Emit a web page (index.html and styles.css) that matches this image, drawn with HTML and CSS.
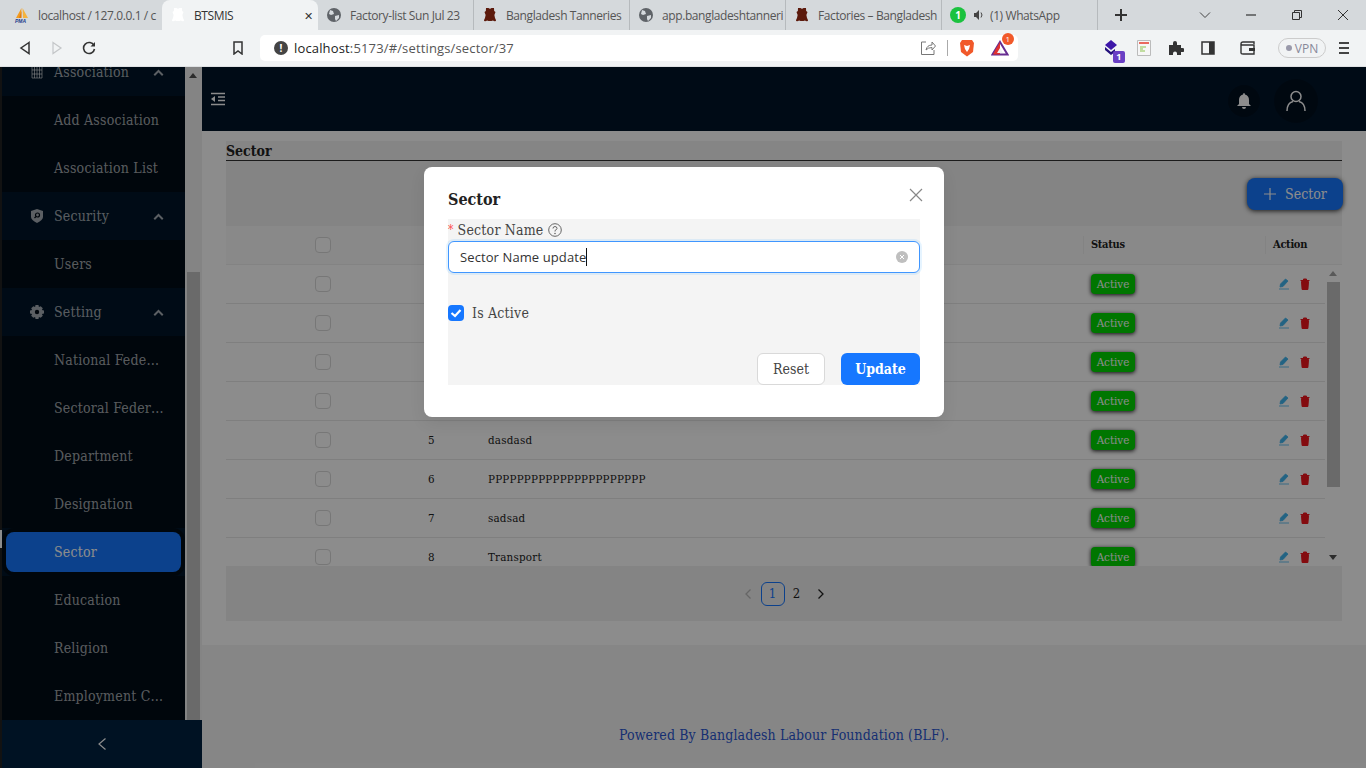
FILE: index.html
```html
<!DOCTYPE html>
<html lang="en">
<head>
    <meta charset="UTF-8">
    <meta name="viewport" content="width=device-width, initial-scale=1.0">
    <title>BTSMIS</title>
    <link rel="stylesheet" href="styles.css">
</head>
<body>

<div class="tabstrip">
    <div class="tab">
        <svg class="fav" viewBox="0 0 16 16"><path d="M7.500 1 2 11h5z" fill="#f39a1e"/><path d="M8.500 1 14 11H9z" fill="#f5b33f"/><path d="M7.500 4v7H5z" fill="#e07a12"/><text x="1" y="15.500" class="pma">PMA</text></svg>
        <span class="tab-title">localhost / 127.0.0.1 / c</span>
    </div>
    <div class="tab tab-active">
        <svg class="fav" viewBox="0 0 16 16"><path d="M4 1h2.500q1.500 1.500 3 0H12q-.5 3 1.500 4-2 3-.5 6 1 1.500 1 3-2 .5-3-.5-3 1-6 0-1 1-3 .5 0-1.500 1-3 1.500-3-.5-6Q4.500 4 4 1z" fill="#fff"/></svg>
        <span class="tab-title">BTSMIS</span>
        <span class="tab-close">✕</span>
    </div>
    <div class="tab">
        <svg class="fav" viewBox="0 0 16 16"><circle cx="8" cy="8" r="7" fill="#5f6368"/><path d="M4 3l3 1 1 3-3 1-2-1zM9 9l4-1 0 3-3 3-1-2z" fill="#d5d9dd"/></svg>
        <span class="tab-title">Factory-list Sun Jul 23</span>
    </div>
    <div class="tab">
        <svg class="fav" viewBox="0 0 16 16"><path d="M4 1h2.500q1.500 1.500 3 0H12q-.5 3 1.500 4-2 3-.5 6 1 1.500 1 3-2 .5-3-.5-3 1-6 0-1 1-3 .5 0-1.500 1-3 1.500-3-.5-6Q4.500 4 4 1z" fill="#5c1a0c"/></svg>
        <span class="tab-title">Bangladesh Tanneries</span>
    </div>
    <div class="tab">
        <svg class="fav" viewBox="0 0 16 16"><circle cx="8" cy="8" r="7" fill="#5f6368"/><path d="M4 3l3 1 1 3-3 1-2-1zM9 9l4-1 0 3-3 3-1-2z" fill="#d5d9dd"/></svg>
        <span class="tab-title">app.bangladeshtanneri</span>
    </div>
    <div class="tab">
        <svg class="fav" viewBox="0 0 16 16"><path d="M4 1h2.500q1.500 1.500 3 0H12q-.5 3 1.500 4-2 3-.5 6 1 1.500 1 3-2 .5-3-.5-3 1-6 0-1 1-3 .5 0-1.500 1-3 1.500-3-.5-6Q4.500 4 4 1z" fill="#5c1a0c"/></svg>
        <span class="tab-title">Factories – Bangladesh</span>
    </div>
    <div class="tab">
        <span class="wa-icon">1</span>
        <svg class="speaker" viewBox="0 0 12 12"><path d="M1 4h2l3-3v10L3 8H1z" fill="#444"/><path d="M8 3.500q2 2.500 0 5" stroke="#444" fill="none"/></svg>
        <span class="tab-title">(1) WhatsApp</span>
    </div>
    <div class="new-tab">
        <svg viewBox="0 0 14 14" width="14" height="14"><path d="M7 1v12M1 7h12" stroke="#333" stroke-width="2"/></svg>
    </div>
    <div class="window-btns">
        <svg viewBox="0 0 12 12" width="12" height="12"><path d="M1 3.500 6 8.500l5-5" stroke="#444" fill="none"/></svg>
        <svg viewBox="0 0 12 12" width="12" height="12"><path d="M1 6h10" stroke="#333" stroke-width="1.200"/></svg>
        <svg viewBox="0 0 12 12" width="12" height="12"><path d="M1.500 3.500h7v7h-7zM3.500 3.500v-2h7v7h-2" stroke="#333" fill="none"/></svg>
        <svg viewBox="0 0 12 12" width="12" height="12"><path d="M1 1l10 10M11 1 1 11" stroke="#333"/></svg>
    </div>
</div>

<div class="toolbar">
    <div class="nav-btns">
        <svg viewBox="0 0 14 14" width="14" height="14"><path d="M11 1.500 3 7l8 5.500z" stroke="#333" stroke-width="1.500" fill="none"/></svg>
        <svg viewBox="0 0 14 14" width="14" height="14"><path d="M3 1.500 11 7l-8 5.500z" stroke="#c4c6c8" stroke-width="1.200" fill="none"/></svg>
        <svg viewBox="0 0 14 14" width="14" height="14"><path d="M12 4.500A5.500 5.500 0 1 0 12.500 8" stroke="#333" stroke-width="1.600" fill="none"/><path d="M13 1v4.500H8.500z" fill="#333"/></svg>
    </div>
    <svg class="bookmark" viewBox="0 0 12 14" width="12" height="14"><path d="M2 1h8v12L6 10l-4 3z" stroke="#333" stroke-width="1.500" fill="none"/></svg>
    <div class="urlbar">
        <span class="info-dot">!</span>
        <span class="url">localhost<span class="url-rest">:5173/#/settings/sector/37</span></span>
        <svg class="share" viewBox="0 0 16 16" width="16" height="16"><path d="M6 2H1.500v12.500H14V10M6 10q1-5 6-5V2l3.500 4-3.500 4V7.500q-4 0-6 2.500z" stroke="#777" fill="none"/></svg>
        <span class="url-sep"></span>
        <svg class="brave" viewBox="0 0 16 18" width="16" height="18"><path d="M3 1h10l2 3-1 9-6 4.500L2 13 1 4z" fill="#f1592a"/><path d="M5 6l3 1 3-1-1 4-2 3-2-3z" fill="#fff"/></svg>
        <span class="bat">
            <svg viewBox="0 0 18 16" width="18" height="16"><path d="M9 2 16.500 14.500h-15z" fill="none" stroke="#662d91" stroke-width="2"/><path d="M9 2 5 8.500l-3 6h7z" fill="#e0322f"/><path d="M9 8l3 5H6z" fill="#f1f3f4"/></svg>
            <span class="bat-badge">1</span>
        </span>
    </div>
    <div class="ext-btns">
        <span class="ext-stack">
            <svg viewBox="0 0 16 16" width="16" height="16"><path d="M7 0l6 5-6 5-6-5z" fill="#3d16a8"/><path d="M1 7l6 5 4-3v3l-4 3-6-5z" fill="#23107c"/></svg>
            <span class="ext-badge">1</span>
        </span>
        <svg viewBox="0 0 14 16" width="14" height="16"><path d="M.5.500h13v15H.5z" fill="#f6f6f6" stroke="#bbb"/><path d="M2 2h10v2H2z" fill="#ea6a5e"/><path d="M3 7h6M3 9h3M3 11h5" stroke="#8bc34a"/></svg>
        <svg viewBox="0 0 16 16" width="16" height="16"><path d="M1 5h4V3a2 2 0 0 1 4 0v2h4v3h1.500a2 2 0 0 1 0 4H13v3H9v-1.500a2 2 0 0 0-4 0V15H1z" fill="#333"/></svg>
        <svg viewBox="0 0 14 14" width="14" height="14"><path d="M1 1h12v12H1z" fill="none" stroke="#333" stroke-width="1.500"/><path d="M8 1h5v12H8z" fill="#333"/></svg>
        <svg class="wallet" viewBox="0 0 16 16" width="16" height="16"><path d="M14 4V2H3Q1 2 1 4v9q0 1 2 1h11v-3M1 4q0 1 2 1h11v3" fill="none" stroke="#333" stroke-width="1.400"/><path d="M9 8h6v3H9z" fill="#333"/></svg>
        <span class="vpn"><i></i>VPN</span>
        <svg class="menu-icon" viewBox="0 0 12 14" width="12" height="14"><path d="M1 2h10M1 7h10M1 12h10" stroke="#444" stroke-width="2"/></svg>
    </div>
</div>

<div class="app">
    <div class="window-edge"></div>

    <aside class="sider">
        <div class="sider-scroll">
            <nav class="menu">
                <div class="menu-title">
                    <svg class="menu-ico" viewBox="0 0 14 14"><path d="M2 1h10v12H2zM7 1v12M2 5h10M2 9h10M4.500 1v12M9.500 1v12" stroke="currentColor" fill="none" stroke-width=".9"/></svg>
                    <span>Association</span><i class="caret"></i>
                </div>
                <div class="menu-item">Add Association</div>
                <div class="menu-item">Association List</div>
                <div class="menu-title">
                    <svg class="menu-ico" viewBox="0 0 14 14"><path d="M7 0l6 2v6q0 3-6 6-6-3-6-6V2z" fill="currentColor"/><circle cx="7.500" cy="6" r="2" fill="none" stroke="#000b16" stroke-width="1.200"/><path d="M6 7.500 4.500 9" stroke="#000b16" stroke-width="1.200"/></svg>
                    <span>Security</span><i class="caret"></i>
                </div>
                <div class="menu-item">Users</div>
                <div class="menu-title">
                    <svg class="menu-ico" viewBox="0 0 14 14"><path d="M5.500 0h3l.4 2 1.800-.8 2.100 2.100-.9 1.800 2.100.4v3l-2.100.4.9 1.800-2.100 2.100-1.800-.8-.4 2h-3l-.4-2-1.800.8-2.100-2.100.9-1.800L0 8.500v-3l2.100-.4-.9-1.800 2.100-2.100 1.800.8z" fill="currentColor"/><circle cx="7" cy="7" r="2.200" fill="#000b16"/></svg>
                    <span>Setting</span><i class="caret"></i>
                </div>
                <div class="menu-item">National Federation</div>
                <div class="menu-item">Sectoral Federation</div>
                <div class="menu-item">Department</div>
                <div class="menu-item">Designation</div>
                <div class="menu-item selected">Sector</div>
                <div class="menu-item">Education</div>
                <div class="menu-item">Religion</div>
                <div class="menu-item">Employment Category</div>
            </nav>
            <div class="sider-bar">
                <i class="sider-up"></i>
                <div class="sider-thumb"></div>
            </div>
        </div>
        <div class="sider-trigger">
            <svg viewBox="0 0 10 14" width="10" height="14"><path d="M8.500 1.500 2 7l6.500 5.500" stroke="#fff" fill="none" stroke-width="1.200"/></svg>
        </div>
    </aside>

    <main class="main">
        <header class="topbar">
            <svg class="fold" viewBox="0 0 16 14" width="16" height="14"><path d="M1 1.500h14M8 5h7M8 8.500h7M1 12.500h14" stroke="#fff" stroke-width="1.300"/><path d="M5 4v6L1 7z" fill="#fff"/></svg>
            <div class="topbar-right">
                <span class="round bell">
                    <svg viewBox="0 0 14 16" width="14" height="16"><path d="M7 0q1 0 1 1.500Q12 2.500 12 7v4l2 2H0l2-2V7q0-4.500 4-5.500Q6 0 7 0zM5 14h4q0 2-2 2t-2-2z" fill="#fff"/></svg>
                </span>
                <span class="round user">
                    <svg viewBox="0 0 20 22" width="20" height="22"><circle cx="10" cy="6.500" r="5" fill="none" stroke="#fff" stroke-width="1.500"/><path d="M1 21q0-8 6-9.500M19 21q0-8-6-9.500" fill="none" stroke="#fff" stroke-width="1.500"/></svg>
                </span>
            </div>
        </header>

        <section class="content">
            <h4 class="page-title">Sector</h4>
            <div class="card-tools">
                <button class="add-btn">
                    <svg viewBox="0 0 14 14" width="14" height="14"><path d="M7 1v12M1 7h12" stroke="#fff" stroke-width="1.200"/></svg>
                    Sector
                </button>
            </div>
            <div class="table-head">
                <div class="cell cell-check"><span class="check"></span></div>
                <div class="cell"></div>
                <div class="cell"></div>
                <div class="cell cell-sep">Status</div>
                <div class="cell cell-sep">Action</div>
            </div>
            <div class="table-wrap">
                <div class="table-body">
                    <div class="row">
                        <div class="cell cell-check"><span class="check"></span></div>
                        <div class="cell"></div><div class="cell"></div>
                        <div class="cell"><span class="status">Active</span></div>
                        <div class="cell cell-act"><svg class="ico-edit" viewBox="0 0 12 12"><path d="M7.500 1l2.500 2-5 5.500-3 .5.500-3zM1 11h10" fill="#3fb4ee" stroke="#3fb4ee" stroke-width=".8"/></svg><svg class="ico-del" viewBox="0 0 12 12"><path d="M2.500 3.500h7l-.6 8H3.100zM1.500 2.500h9M4.500 2.500V1h3v1.500" fill="#f0151c" stroke="#f0151c"/></svg></div>
                    </div>
                    <div class="row">
                        <div class="cell cell-check"><span class="check"></span></div>
                        <div class="cell"></div><div class="cell"></div>
                        <div class="cell"><span class="status">Active</span></div>
                        <div class="cell cell-act"><svg class="ico-edit" viewBox="0 0 12 12"><path d="M7.500 1l2.500 2-5 5.500-3 .5.500-3zM1 11h10" fill="#3fb4ee" stroke="#3fb4ee" stroke-width=".8"/></svg><svg class="ico-del" viewBox="0 0 12 12"><path d="M2.500 3.500h7l-.6 8H3.100zM1.500 2.500h9M4.500 2.500V1h3v1.500" fill="#f0151c" stroke="#f0151c"/></svg></div>
                    </div>
                    <div class="row">
                        <div class="cell cell-check"><span class="check"></span></div>
                        <div class="cell"></div><div class="cell"></div>
                        <div class="cell"><span class="status">Active</span></div>
                        <div class="cell cell-act"><svg class="ico-edit" viewBox="0 0 12 12"><path d="M7.500 1l2.500 2-5 5.500-3 .5.500-3zM1 11h10" fill="#3fb4ee" stroke="#3fb4ee" stroke-width=".8"/></svg><svg class="ico-del" viewBox="0 0 12 12"><path d="M2.500 3.500h7l-.6 8H3.100zM1.500 2.500h9M4.500 2.500V1h3v1.500" fill="#f0151c" stroke="#f0151c"/></svg></div>
                    </div>
                    <div class="row">
                        <div class="cell cell-check"><span class="check"></span></div>
                        <div class="cell"></div><div class="cell"></div>
                        <div class="cell"><span class="status">Active</span></div>
                        <div class="cell cell-act"><svg class="ico-edit" viewBox="0 0 12 12"><path d="M7.500 1l2.500 2-5 5.500-3 .5.500-3zM1 11h10" fill="#3fb4ee" stroke="#3fb4ee" stroke-width=".8"/></svg><svg class="ico-del" viewBox="0 0 12 12"><path d="M2.500 3.500h7l-.6 8H3.100zM1.500 2.500h9M4.500 2.500V1h3v1.500" fill="#f0151c" stroke="#f0151c"/></svg></div>
                    </div>
                    <div class="row">
                        <div class="cell cell-check"><span class="check"></span></div>
                        <div class="cell">5</div><div class="cell">dasdasd</div>
                        <div class="cell"><span class="status">Active</span></div>
                        <div class="cell cell-act"><svg class="ico-edit" viewBox="0 0 12 12"><path d="M7.500 1l2.500 2-5 5.500-3 .5.500-3zM1 11h10" fill="#3fb4ee" stroke="#3fb4ee" stroke-width=".8"/></svg><svg class="ico-del" viewBox="0 0 12 12"><path d="M2.500 3.500h7l-.6 8H3.100zM1.500 2.500h9M4.500 2.500V1h3v1.500" fill="#f0151c" stroke="#f0151c"/></svg></div>
                    </div>
                    <div class="row">
                        <div class="cell cell-check"><span class="check"></span></div>
                        <div class="cell">6</div><div class="cell">PPPPPPPPPPPPPPPPPPPPPP</div>
                        <div class="cell"><span class="status">Active</span></div>
                        <div class="cell cell-act"><svg class="ico-edit" viewBox="0 0 12 12"><path d="M7.500 1l2.500 2-5 5.500-3 .5.500-3zM1 11h10" fill="#3fb4ee" stroke="#3fb4ee" stroke-width=".8"/></svg><svg class="ico-del" viewBox="0 0 12 12"><path d="M2.500 3.500h7l-.6 8H3.100zM1.500 2.500h9M4.500 2.500V1h3v1.500" fill="#f0151c" stroke="#f0151c"/></svg></div>
                    </div>
                    <div class="row">
                        <div class="cell cell-check"><span class="check"></span></div>
                        <div class="cell">7</div><div class="cell">sadsad</div>
                        <div class="cell"><span class="status">Active</span></div>
                        <div class="cell cell-act"><svg class="ico-edit" viewBox="0 0 12 12"><path d="M7.500 1l2.500 2-5 5.500-3 .5.500-3zM1 11h10" fill="#3fb4ee" stroke="#3fb4ee" stroke-width=".8"/></svg><svg class="ico-del" viewBox="0 0 12 12"><path d="M2.500 3.500h7l-.6 8H3.100zM1.500 2.500h9M4.500 2.500V1h3v1.500" fill="#f0151c" stroke="#f0151c"/></svg></div>
                    </div>
                    <div class="row">
                        <div class="cell cell-check"><span class="check"></span></div>
                        <div class="cell">8</div><div class="cell">Transport</div>
                        <div class="cell"><span class="status">Active</span></div>
                        <div class="cell cell-act"><svg class="ico-edit" viewBox="0 0 12 12"><path d="M7.500 1l2.500 2-5 5.500-3 .5.500-3zM1 11h10" fill="#3fb4ee" stroke="#3fb4ee" stroke-width=".8"/></svg><svg class="ico-del" viewBox="0 0 12 12"><path d="M2.500 3.500h7l-.6 8H3.100zM1.500 2.500h9M4.500 2.500V1h3v1.500" fill="#f0151c" stroke="#f0151c"/></svg></div>
                    </div>
                </div>
                <div class="table-bar">
                    <i class="bar-up"></i>
                    <div class="bar-thumb"></div>
                    <i class="bar-down"></i>
                </div>
            </div>
            <div class="pager">
                <svg class="pager-prev" viewBox="0 0 8 12" width="8" height="12"><path d="M6.500 1.500 2 6l4.500 4.500" stroke="#bbb" fill="none" stroke-width="1.300"/></svg>
                <span class="page page-on">1</span>
                <span class="page">2</span>
                <svg class="pager-next" viewBox="0 0 8 12" width="8" height="12"><path d="M1.500 1.500 6 6l-4.500 4.500" stroke="#222" fill="none" stroke-width="1.300"/></svg>
            </div>
        </section>

        <footer class="foot">Powered By Bangladesh Labour Foundation (BLF).</footer>
    </main>

    <div class="overlay">
        <div class="modal">
            <svg class="modal-close" viewBox="0 0 14 14" width="14" height="14"><path d="M1 1l12 12M13 1 1 13" stroke="#888" stroke-width="1.200"/></svg>
            <div class="modal-title">Sector</div>
            <form class="modal-form">
                <label class="field-label"><span class="req">*</span> Sector Name
                    <svg viewBox="0 0 14 14" width="14" height="14"><circle cx="7" cy="7" r="6.300" fill="none" stroke="#666"/><path d="M5 5.500Q5 3.500 7 3.500T9 5.500Q9 6.500 7 7.500V8.500" fill="none" stroke="#666"/><circle cx="7" cy="10.500" r=".8" fill="#666"/></svg>
                </label>
                <div class="input-box">
                    <span class="input-text">Sector Name update</span><i class="input-caret"></i>
                    <svg class="input-clear" viewBox="0 0 12 12" width="12" height="12"><circle cx="6" cy="6" r="6" fill="#bfbfbf"/><path d="M4 4l4 4M8 4 4 8" stroke="#fff"/></svg>
                </div>
                <div class="check-row">
                    <span class="check-on"><svg viewBox="0 0 16 16" width="16" height="16"><path d="M3.500 8 7 11l5.500-6" stroke="#fff" stroke-width="2.200" fill="none"/></svg></span>
                    <span>Is Active</span>
                </div>
                <div class="form-btns">
                    <button type="button" class="btn-reset">Reset</button>
                    <button type="button" class="btn-update">Update</button>
                </div>
            </form>
        </div>
    </div>
</div>

</body>
</html>
```

FILE: styles.css
```css
* {
    box-sizing: border-box;
}

html, body {
    height: 100%;
}

body {
    margin: 0;
    height: 768px;
    overflow: hidden;
    display: flex;
    flex-direction: column;
    font-family: "DejaVu Serif", "Liberation Serif", serif;
    font-stretch: condensed;
    font-size: 14px;
    letter-spacing: .2px;
    background: #333;
}

/* browser chrome */
.tabstrip {
    height: 30px;
    flex: none;
    display: flex;
    align-items: center;
    padding-left: 6px;
    background: #d5d9dc;
    font-family: "Open Sans", "Noto Sans", sans-serif;
    font-stretch: normal;
    font-size: 12px;
    letter-spacing: 0;
    color: #555;
}

.tab {
    width: 156px;
    height: 30px;
    flex: none;
    display: flex;
    align-items: center;
    padding-left: 8px;
    gap: 8px;
    border-right: 1px solid #b6babd;
    overflow: hidden;
}

.tab:first-child {
    border-right: none;
}

.tab-active {
    background: #f1f3f4;
    color: #333;
    border-radius: 8px 8px 0 0;
    border-right: none;
    position: relative;
}

.tab-title {
    white-space: nowrap;
    overflow: hidden;
    flex: 1;
    letter-spacing: -.4px;
}

.tab-close {
    font-size: 11px;
    padding-right: 5px;
    color: #333;
}

.fav {
    width: 16px;
    height: 16px;
    flex: none;
}

.pma {
    font-family: "Liberation Sans", sans-serif;
    font-size: 5px;
    font-weight: 700;
    font-style: italic;
    fill: #223a8c;
}

.wa-icon {
    width: 16px;
    height: 16px;
    flex: none;
    border-radius: 50%;
    background: #1bc23f;
    color: #fff;
    font-size: 10px;
    font-weight: 700;
    line-height: 16px;
    text-align: center;
}

.speaker {
    width: 12px;
    height: 12px;
    flex: none;
    margin-left: -1px;
    margin-right: -3px;
}

.new-tab {
    width: 46px;
    padding-left: 16px;
    display: flex;
}

.window-btns {
    display: flex;
    align-items: center;
    margin-left: auto;
    gap: 34px;
    padding-right: 17px;
}

.toolbar {
    height: 37px;
    flex: none;
    display: flex;
    align-items: center;
    background: #f1f3f4;
    border-bottom: 1px solid #dfe1e3;
}

.nav-btns {
    display: flex;
    gap: 18px;
    padding-left: 18px;
    width: 232px;
}

.bookmark {
    flex: none;
}

.urlbar {
    width: 758px;
    height: 26px;
    margin-left: 16px;
    flex: none;
    display: flex;
    align-items: center;
    background: #fff;
    border-radius: 5px;
    padding-left: 14px;
    font-family: "Open Sans", "Noto Sans", sans-serif;
    font-stretch: normal;
    font-size: 13px;
    color: #222;
}

.info-dot {
    width: 14px;
    height: 14px;
    border-radius: 50%;
    background: #444;
    color: #fff;
    font-size: 10px;
    font-weight: 700;
    line-height: 14px;
    text-align: center;
    flex: none;
}

.url {
    margin-left: 6px;
    flex: 1;
    letter-spacing: .15px;
}

.url-rest {
    color: #555;
}

.url-sep {
    width: 1px;
    height: 16px;
    background: #aaa;
    margin: 0 11px;
}

.bat {
    position: relative;
    margin: 0 9px 0 16px;
    display: flex;
}

.bat-badge {
    position: absolute;
    top: -7px;
    right: -5px;
    width: 12px;
    height: 12px;
    border-radius: 50%;
    background: #f1592a;
    color: #fff;
    font-size: 8px;
    line-height: 12px;
    text-align: center;
}

.ext-btns {
    flex: 1;
    display: flex;
    align-items: center;
    padding-left: 86px;
    gap: 17px;
}

.ext-stack {
    position: relative;
    display: flex;
}

.ext-badge {
    position: absolute;
    right: -5px;
    bottom: -7px;
    width: 12px;
    height: 12px;
    border-radius: 2px;
    background: #6a3fc4;
    color: #fff;
    font-family: "Open Sans", sans-serif;
    font-stretch: normal;
    font-size: 9px;
    font-weight: 700;
    line-height: 12px;
    text-align: center;
}

.wallet {
    margin-left: 8px;
}

.vpn {
    width: 48px;
    height: 20px;
    margin-left: 5px;
    display: flex;
    align-items: center;
    justify-content: center;
    gap: 3px;
    border: 1px solid #ccc;
    border-radius: 10px;
    font-family: "Open Sans", sans-serif;
    font-stretch: normal;
    font-size: 12px;
    letter-spacing: 0;
    color: #889;
}

.vpn i {
    width: 6px;
    height: 6px;
    border-radius: 50%;
    background: #99a;
}

.menu-icon {
    margin-left: -5px;
}

/* app */
.app {
    height: 701px;
    flex: none;
    display: flex;
    position: relative;
    overflow: hidden;
}

.window-edge {
    width: 2px;
    flex: none;
    background: linear-gradient(#222 0 463px, #fff 463px 481px, #222 481px);
}

.sider {
    width: 200px;
    flex: none;
    display: flex;
    flex-direction: column;
    background: #001529;
}

.sider-scroll {
    height: 653px;
    display: flex;
    overflow: hidden;
}

.menu {
    width: 183px;
    flex: none;
    margin-top: -19px;
    color: rgba(255, 255, 255, .65);
}

.menu-title {
    height: 48px;
    display: flex;
    align-items: center;
    padding-left: 28px;
    padding-right: 21px;
    background: #001529;
}

.menu-ico {
    width: 14px;
    height: 14px;
    flex: none;
    margin-right: 10px;
}

.menu-title span {
    flex: 1;
}

.caret {
    width: 7px;
    height: 7px;
    margin-top: 4px;
    margin-right: 2px;
    border-left: 2px solid currentColor;
    border-top: 2px solid currentColor;
    transform: rotate(45deg);
}

.menu-item {
    height: 48px;
    line-height: 48px;
    padding-left: 52px;
    padding-right: 21px;
    background: #000c17;
    white-space: nowrap;
    overflow: hidden;
    text-overflow: ellipsis;
}

.menu-item.selected {
    height: 40px;
    line-height: 40px;
    margin: 4px 4px;
    padding-left: 48px;
    border-radius: 8px;
    background: #1677ff;
    color: #fff;
    box-shadow: 0 0 0 4px #000c17;
}

.sider-bar {
    width: 17px;
    flex: none;
    background: #f1f1f1;
    padding: 0 2px;
    position: relative;
}

.sider-up {
    position: absolute;
    top: 6px;
    left: 4px;
    border: 4px solid transparent;
    border-top: none;
    border-bottom: 5px solid #505050;
}

.sider-thumb {
    margin-top: 205px;
    height: 448px;
    background: #c1c1c1;
}

.sider-trigger {
    height: 48px;
    display: flex;
    align-items: center;
    justify-content: center;
    background: #002140;
}

.main {
    flex: 1;
    display: flex;
    flex-direction: column;
    min-width: 0;
}

.topbar {
    height: 64px;
    flex: none;
    display: flex;
    align-items: center;
    padding-left: 8px;
    background: #001529;
}

.topbar-right {
    margin-left: auto;
    display: flex;
    align-items: center;
    gap: 14px;
    padding-right: 48px;
    padding-top: 4px;
}

.round {
    display: flex;
    align-items: center;
    justify-content: center;
    border-radius: 50%;
    background: rgba(0, 0, 0, .25);
}

.bell {
    width: 32px;
    height: 32px;
}

.user {
    width: 44px;
    height: 44px;
}

.content {
    height: 514px;
    flex: none;
    padding: 10px 24px 24px;
    background: #fff;
}

.page-title {
    height: 20px;
    margin: 0;
    padding-top: 1px;
    background: #f3f3f3;
    border-bottom: 1px solid #333;
    font-size: 14px;
    line-height: 19px;
    font-weight: 700;
    letter-spacing: 0;
    color: #222;
}

.card-tools {
    height: 65px;
    display: flex;
    justify-content: flex-end;
    align-items: center;
    background: #f0f0f0;
    padding-top: 1px;
}

.add-btn {
    width: 96px;
    height: 32px;
    margin-right: -1px;
    display: flex;
    align-items: center;
    justify-content: center;
    gap: 8px;
    border: none;
    border-radius: 8px;
    background: #1677ff;
    color: #fff;
    font: inherit;
    box-shadow: 0 1px 5px rgba(0, 0, 0, .8);
}

.table-head, .row {
    display: grid;
    align-items: center;
    font-size: 11.500px;
    color: #222;
}

.table-head {
    height: 39px;
    grid-template-columns: 194px 60px 603px 182px 1fr;
    background: #fafafa;
    border-bottom: 1px solid #eee;
    font-size: 11px;
    letter-spacing: -.3px;
    font-weight: 700;
}

.row {
    height: 39px;
    grid-template-columns: 194px 60px 603px 182px 1fr;
    background: #fff;
    border-bottom: 1px solid #e8e8e8;
}

.cell {
    padding-left: 8px;
    white-space: nowrap;
}

.cell-check {
    padding-left: 89px;
    display: flex;
}

.cell-sep {
    padding-left: 7px;
    border-left: 1px solid #eee;
    line-height: 18px;
}

.cell-act {
    padding-left: 13px;
    display: flex;
    align-items: center;
    gap: 9px;
}

.ico-edit, .ico-del {
    width: 12px;
    height: 12px;
}

.check {
    width: 16px;
    height: 16px;
    border: 1px solid #d9d9d9;
    border-radius: 4px;
    background: #fff;
}

.table-wrap {
    height: 301px;
    display: flex;
    background: #fff;
}

.table-body {
    flex: 1;
    overflow: hidden;
}

.table-bar {
    width: 17px;
    flex: none;
    padding: 17px 2px;
    position: relative;
    background: #fff;
}

.bar-thumb {
    height: 205px;
    background: #c1c1c1;
}

.bar-up, .bar-down {
    position: absolute;
    left: 4px;
    border: 4px solid transparent;
}

.bar-up {
    top: 6px;
    border-top: none;
    border-bottom: 5px solid #a3a3a3;
}

.bar-down {
    bottom: 6px;
    border-bottom: none;
    border-top: 5px solid #505050;
}

.status {
    display: inline-block;
    width: 44px;
    height: 20px;
    text-align: center;
    line-height: 20px;
    letter-spacing: 0;
    border-radius: 4px;
    background: #00d800;
    color: #fff;
    box-shadow: 0 1px 4px rgba(0, 0, 0, .9);
}

.pager {
    height: 55px;
    display: flex;
    align-items: center;
    justify-content: center;
    background: #f0f0f0;
}

.pager-prev {
    margin-right: 9px;
}

.pager-next {
    margin-left: 8px;
}

.page {
    width: 24px;
    height: 24px;
    line-height: 22px;
    text-align: center;
    border: 1px solid transparent;
    border-radius: 6px;
    font-size: 13px;
    color: #222;
}

.page-on {
    border-color: #1677ff;
    color: #1677ff;
}

.foot {
    flex: 1;
    padding-top: 82px;
    text-align: center;
    background: #f5f5f5;
    color: #2a55d0;
    letter-spacing: .13px;
}

/* modal */
.overlay {
    position: absolute;
    inset: 0;
    display: flex;
    justify-content: center;
    align-items: flex-start;
    padding-top: 100px;
    background: rgba(0, 0, 0, .45);
}

.modal {
    width: 520px;
    height: 250px;
    position: relative;
    margin-left: 2px;
    padding: 20px 24px 32px;
    border-radius: 8px;
    background: #fff;
    box-shadow: 0 6px 16px rgba(0, 0, 0, .08);
}

.modal-close {
    position: absolute;
    top: 21px;
    right: 21px;
}

.modal-title {
    height: 24px;
    margin-bottom: 8px;
    padding-top: 1px;
    font-size: 16px;
    line-height: 24px;
    font-weight: 700;
    letter-spacing: 0;
    color: #222;
}

.modal-form {
    height: 166px;
    background: #f4f4f4;
}

.field-label {
    height: 22px;
    display: flex;
    align-items: center;
    gap: 4px;
    color: #444;
}

.req {
    color: #ff4d4f;
    font-size: 12px;
}

.input-box {
    height: 32px;
    display: flex;
    align-items: center;
    padding: 0 11px;
    background: #fff;
    border: 1px solid #4096ff;
    border-radius: 6px;
    box-shadow: 0 0 0 2px rgba(5, 145, 255, .1);
    font-family: "Open Sans", "Noto Sans", sans-serif;
    font-stretch: normal;
    font-size: 13px;
    letter-spacing: .1px;
    color: #333;
}

.input-caret {
    width: 1px;
    height: 18px;
    background: #111;
}

.input-clear {
    margin-left: auto;
}

.check-row {
    height: 32px;
    margin-top: 24px;
    display: flex;
    align-items: center;
    gap: 8px;
    color: #444;
}

.check-on {
    width: 16px;
    height: 16px;
    border-radius: 4px;
    background: #1677ff;
    display: flex;
}

.form-btns {
    margin-top: 24px;
    display: flex;
    justify-content: flex-end;
    gap: 16px;
}

.btn-reset, .btn-update {
    height: 32px;
    border-radius: 6px;
    font: inherit;
}

.btn-reset {
    width: 68px;
    border: 1px solid #d9d9d9;
    background: #fff;
    color: #444;
}

.btn-update {
    width: 79px;
    border: none;
    background: #1677ff;
    color: #fff;
    font-weight: 700;
}
```
